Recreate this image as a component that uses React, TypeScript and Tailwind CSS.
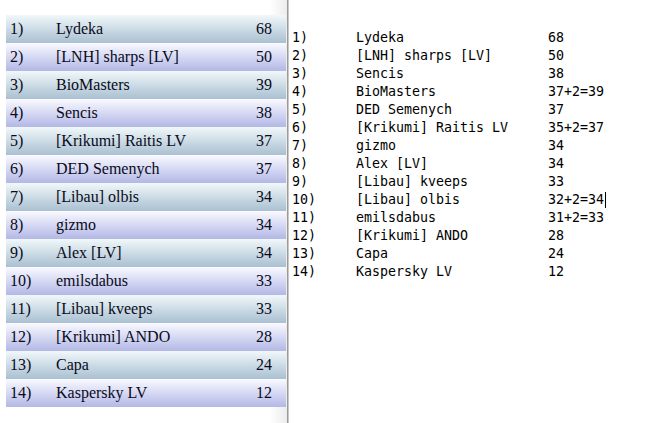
import React from 'react';

const table = [
  ['Lydeka', '68'],
  ['[LNH] sharps [LV]', '50'],
  ['BioMasters', '39'],
  ['Sencis', '38'],
  ['[Krikumi] Raitis LV', '37'],
  ['DED Semenych', '37'],
  ['[Libau] olbis', '34'],
  ['gizmo', '34'],
  ['Alex [LV]', '34'],
  ['emilsdabus', '33'],
  ['[Libau] kveeps', '33'],
  ['[Krikumi] ANDO', '28'],
  ['Capa', '24'],
  ['Kaspersky LV', '12'],
];

const notes = [
  ['Lydeka', '68'],
  ['[LNH] sharps [LV]', '50'],
  ['Sencis', '38'],
  ['BioMasters', '37+2=39'],
  ['DED Semenych', '37'],
  ['[Krikumi] Raitis LV', '35+2=37'],
  ['gizmo', '34'],
  ['Alex [LV]', '34'],
  ['[Libau] kveeps', '33'],
  ['[Libau] olbis', '32+2=34'],
  ['emilsdabus', '31+2=33'],
  ['[Krikumi] ANDO', '28'],
  ['Capa', '24'],
  ['Kaspersky LV', '12'],
];

const App = () => {
  return (
    <div className="flex w-[647px] h-[423px] bg-white overflow-hidden">
      <div className="w-[287px] shrink-0 pt-[15px] pl-[6px] pr-[1px] bg-gradient-to-r from-white from-[94%] to-[#ececec]">
        <div className="font-['Liberation_Serif',serif] text-[16px] text-[#0a0a1a]">
          {table.map(([name, score], i) => (
            <div
              key={i}
              className={
                'h-[28px] flex items-center pl-[4px] pr-[14px] ' +
                (i % 2 == 0
                  ? 'bg-gradient-to-b from-[#f1f8fa] to-[#a9c0d1]'
                  : 'bg-gradient-to-b from-[#fafaff] to-[#b3b8e6]')
              }
            >
              <div className="w-[46px]">{i + 1})</div>
              <div className="flex-1">{name}</div>
              <div>{score}</div>
            </div>
          ))}
        </div>
      </div>
      <div className="w-[2px] shrink-0 bg-[#9a9a9a] border-r border-[#c8c8c8]" />
      <div className="flex-1 pt-[29px] pl-[3px] font-['DejaVu_Sans_Mono',monospace] text-[13.3px] leading-[18px] text-black">
        {notes.map(([name, score], i) => (
          <div key={i} className="flex h-[18px] whitespace-pre">
            <div className="w-[64px]">{i + 1})</div>
            <div className="w-[192px]">{name}</div>
            <div className="relative">
              {score}
              {i == 9 && (
                <span className="absolute right-[-2px] top-[1px] w-px h-[16px] bg-black" />
              )}
            </div>
          </div>
        ))}
      </div>
    </div>
  );
};

export default App;
